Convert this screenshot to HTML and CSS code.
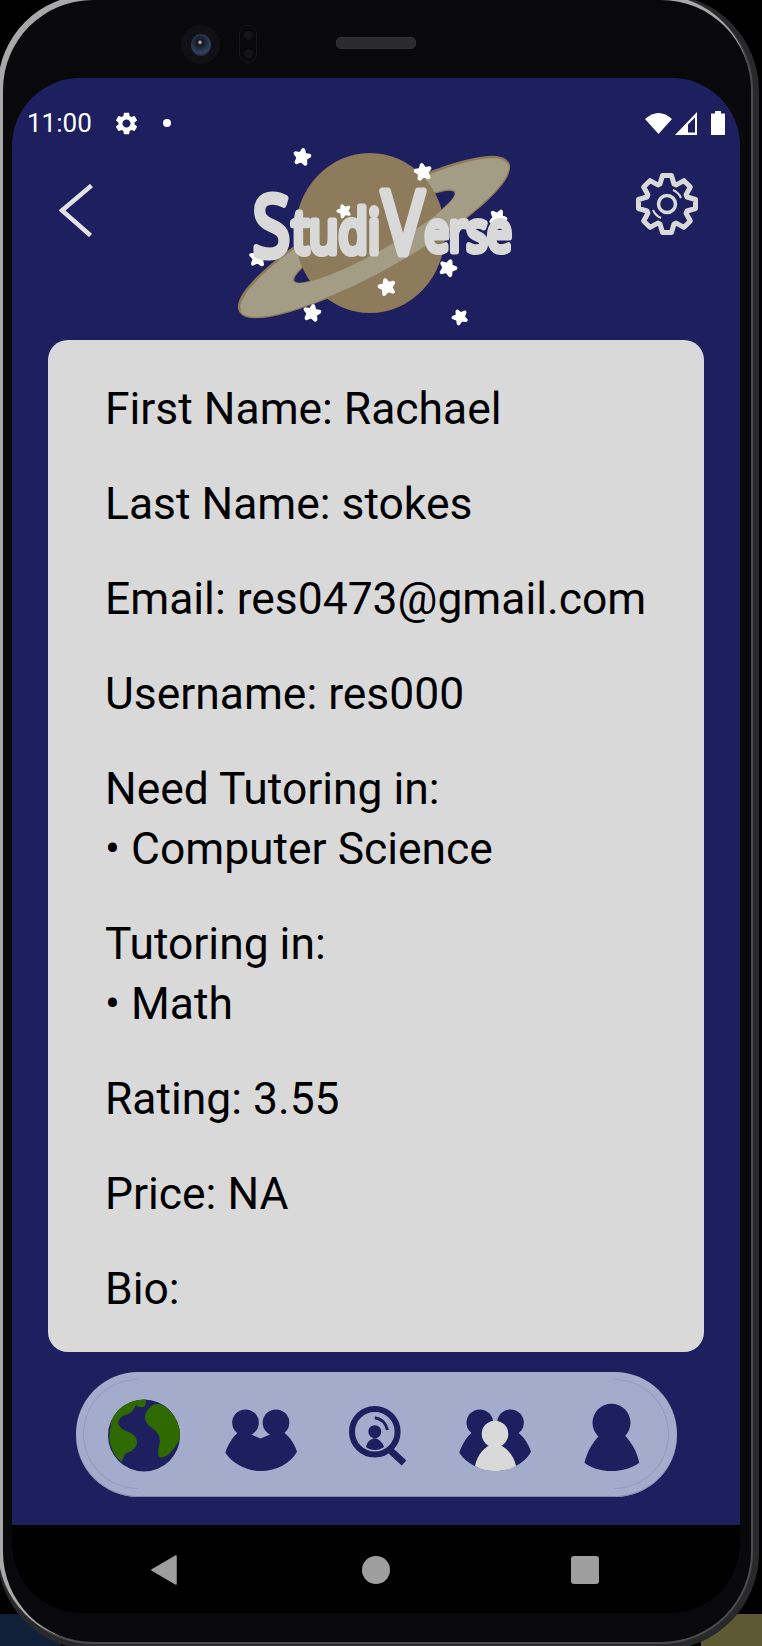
FILE: index.html
```html
<!DOCTYPE html>
<html lang="en">
<head>
<meta charset="utf-8">
<title>StudiVerse profile</title>
<link rel="stylesheet" href="styles.css">
</head>
<body>
<div class="face">
  <div class="earpiece">
    <span class="camera"><span class="lens"></span></span>
    <span class="sensor"><span class="sensor-dot"></span><span class="sensor-dot"></span></span>
    <span class="speaker"></span>
  </div>
  <main class="screen">
    <div class="status">
      <span class="time">11:00</span>
      <svg class="status-gear" viewBox="0 0 24 24"><path fill="#fff" fill-rule="evenodd" d="M19.14 12.94c.04-.3.06-.61.06-.94 0-.32-.02-.64-.07-.94l2.03-1.58c.18-.14.23-.41.12-.61l-1.92-3.32c-.12-.22-.37-.29-.59-.22l-2.39.96c-.5-.38-1.03-.7-1.62-.94l-.36-2.54c-.04-.24-.24-.41-.48-.41h-3.84c-.24 0-.43.17-.47.41l-.36 2.54c-.59.24-1.13.57-1.62.94l-2.39-.96c-.22-.08-.47 0-.59.22L2.74 8.87c-.12.21-.08.47.12.61l2.03 1.58c-.05.3-.09.63-.09.94s.02.64.07.94l-2.03 1.58c-.18.14-.23.41-.12.61l1.92 3.32c.12.22.37.29.59.22l2.39-.96c.5.38 1.03.7 1.62.94l.36 2.54c.05.24.24.41.48.41h3.84c.24 0 .44-.17.47-.41l.36-2.54c.59-.24 1.13-.56 1.62-.94l2.39.96c.22.08.47 0 .59-.22l1.92-3.32c.12-.22.07-.47-.12-.61l-2.01-1.58zM12 15.6c-1.98 0-3.6-1.62-3.6-3.6s1.62-3.6 3.6-3.6 3.6 1.62 3.6 3.6-1.62 3.6-3.6 3.6z"/></svg>
      <span class="status-dot"></span>
      <svg class="wifi" viewBox="0 0 27 24"><path fill="#fff" d="M0 8Q13.5-4 27 8L13.5 23Z"/></svg>
      <svg class="signal" viewBox="0 0 22 23"><path fill="#fff" fill-rule="evenodd" d="M22 0V23H0ZM20 5.500L13 12.500V20.500H20Z"/></svg>
      <svg class="battery" viewBox="0 0 14 24"><path fill="#fff" d="M4 0H10V2.500H14V24H0V2.500H4Z"/></svg>
    </div>
    <header class="topbar">
      <svg class="back" viewBox="0 0 34 53"><path d="M32.500 1.500L3 26.500L31.500 51.500" fill="none" stroke="#e3e3e6" stroke-width="4.500"/></svg>
      <svg class="logo" viewBox="0 0 340 210" role="img" aria-label="StudiVerse">
        <defs>
          <clipPath id="front"><rect x="0" y="107" width="400" height="120"/></clipPath>
          <path id="star" d="M0-7L2-2.500H7L3.200 1L4.500 6L0 3.200L-4.500 6L-3.200 1L-7-2.500H-2Z" fill="#fff" stroke="#fff" stroke-width="4" stroke-linejoin="round"/>
        </defs>
        <ellipse class="ring" cx="174" cy="107" rx="153" ry="34" transform="rotate(-29 174 107)"/>
        <ellipse class="hole" cx="174.500" cy="107" rx="92" ry="15" transform="rotate(-29 174 107)"/>
        <ellipse class="planet" cx="170" cy="103" rx="75" ry="80"/>
        <path class="band" clip-path="url(#front)" fill-rule="evenodd" transform="rotate(-29 174 107)" d="M21 107a153 34 0 1 0 306 0a153 34 0 1 0-306 0ZM82.500 107a92 15 0 1 0 184 0a92 15 0 1 0-184 0Z"/>
        <use href="#star" transform="translate(102 27) rotate(10)"/>
        <use href="#star" transform="translate(223 42) rotate(-10)"/>
        <use href="#star" transform="translate(144 81) rotate(-20) scale(.8)"/>
        <use href="#star" transform="translate(298 88) rotate(25)"/>
        <use href="#star" transform="translate(58 128) rotate(5)"/>
        <use href="#star" transform="translate(248 138) rotate(20)"/>
        <use href="#star" transform="translate(187 157) rotate(-15)"/>
        <use href="#star" transform="translate(112 183) rotate(10)"/>
        <use href="#star" transform="translate(260 187) rotate(-25) scale(.9)"/>
        <text class="logo-text" transform="scale(.8 1)"><tspan class="l-s" x="66" y="126">S</tspan><tspan class="l-tudi" x="115" y="123">tudi</tspan><tspan class="l-v" x="227.500" y="124">V</tspan><tspan class="l-erse" x="281" y="121">erse</tspan></text>
      </svg>
      <svg class="settings" viewBox="-33 -33 66 66">
        <polygon class="gear-line" points="-7,-20 -4.500,-28.500 4.500,-28.500 7,-20 9.190,-19.090 16.970,-23.330 23.330,-16.970 19.090,-9.190 20,-7 28.500,-4.500 28.500,4.500 20,7 19.090,9.190 23.330,16.970 16.970,23.330 9.190,19.090 7,20 4.500,28.500 -4.500,28.500 -7,20 -9.190,19.090 -16.970,23.330 -23.330,16.970 -19.090,9.190 -20,7 -28.500,4.500 -28.500,-4.500 -20,-7 -19.090,-9.190 -23.330,-16.970 -16.970,-23.330 -9.190,-19.090"/>
        <circle class="gear-hub" r="8.500"/>
        <path class="gear-arc" d="M6-14A15 15 0 0 1 14-6M-14 6A15 15 0 0 0-6 14"/>
      </svg>
    </header>
    <section class="card">
      <p class="field">First Name: Rachael</p>
      <p class="field">Last Name: stokes</p>
      <p class="field">Email: res0473@gmail.com</p>
      <p class="field">Username: res000</p>
      <p class="field">Need Tutoring in:<br>• Computer Science</p>
      <p class="field">Tutoring in:<br>• Math</p>
      <p class="field">Rating: 3.55</p>
      <p class="field">Price: NA</p>
      <p class="field">Bio:</p>
    </section>
    <nav class="pill">
      <svg class="tab" viewBox="0 0 80 80">
        <defs><clipPath id="globe"><circle cx="40" cy="40.500" r="36"/></clipPath></defs>
        <circle class="navy" cx="40" cy="40.500" r="36"/>
        <g clip-path="url(#globe)">
          <path class="green" d="M33 3H42C42.500 9 41 12 38 12.300C35 12.500 33 11 32 10C30 14 28 18 23 19.500C18 20.500 14 24 14.500 28C15 32 18 34 22 36C28 38 33 41 33 47C33 52 29 56 24 57.500C20 58.500 19 63 18 67C11 62 8 56 5.500 46C5 40 6 34 7 30C5 20 20 5 33 3Z"/>
          <path class="green" d="M52.700 9C60 8 74 20 79 40C75 46 71 53 66 58C62 62 57 64 55 61.500C53 58 55 52 56 46C56 40 52 36 48 33C44 30 41 27 41 22C41 17 47 9 52.700 9Z"/>
        </g>
      </svg>
      <svg class="tab" viewBox="0 0 80 80">
        <g class="navy"><circle cx="24.500" cy="27.700" r="13.300"/><circle cx="55" cy="27.700" r="13.300"/><path d="M4.300 57.700C8 47 13 40 20 35L39.500 43.500L60 35C67 40 73 47 76 56.700C70 68 55 76 40 76C25 76 11 68 4.300 57.700Z"/></g>
      </svg>
      <svg class="tab" viewBox="0 0 80 80">
        <circle class="lens-ring" cx="36.800" cy="36.700" r="22.800"/>
        <path class="lens-handle" d="M53 56L66 68"/>
        <g class="navy"><circle cx="36.800" cy="36.700" r="6.500"/><path d="M28 52C29 47 32 44 36.800 43C41 44 45 48 46 52C41 56 33 56 28 52Z"/></g>
        <path class="lens-wave" d="M36.800 22.700Q47 24 49.500 35"/>
      </svg>
      <svg class="tab" viewBox="0 0 80 80">
        <g class="navy"><circle cx="24.800" cy="27.700" r="13.300"/><circle cx="55.500" cy="27.700" r="13.300"/><path d="M4.300 57.700C8 47 13 40 20 35L39.500 43.500L60 35C67 40 73 47 76 56.700C70 68 55 76 40 76C25 76 11 68 4.300 57.700Z"/></g>
        <circle class="light" cx="40" cy="39" r="13.300"/>
        <path class="light" d="M20 71C22 60 30 50 40 49C50 50 59 60 61 71C54 75 47 76 40 76C33 76 26 75 20 71Z"/>
      </svg>
      <svg class="tab" viewBox="0 0 80 80">
        <g class="navy"><circle cx="39.500" cy="27.700" r="19"/><path d="M12.500 67.700C15 57 20 48 27.800 40L52.500 40C60 48 65 57 67.200 67.700C60 73 50 76 39.500 76C29 76 19 73 12.500 67.700Z"/></g>
      </svg>
    </nav>
    <div class="navbar">
      <svg class="nav-back" viewBox="0 0 26 30"><path d="M25 1V29L1 15Z" fill="#9e9e9e" stroke="#9e9e9e" stroke-width="1.500" stroke-linejoin="round"/></svg>
      <span class="nav-home"></span>
      <span class="nav-recent"></span>
    </div>
  </main>
</div>
</body>
</html>
```

FILE: styles.css
```css
* { box-sizing: border-box; }

html, body { margin: 0; height: 1646px; overflow: hidden; }

body {
  background:
    linear-gradient(90deg, #0f2038 0 8%, #000 8% 92%, #5d5a33 92%) bottom / 100% 32px no-repeat,
    #000;
  font-family: Roboto, "Liberation Sans", sans-serif;
}

.face {
  width: 748px;
  height: 1642px;
  margin-left: 3px;
  padding: 0 11px 0 9px;
  background: #09090b;
  border-radius: 90px;
  box-shadow: -3px -3px 0 2px #a8a8a8, 0 0 0 2px #4c4c4e, 1px 1px 0 7px #29292b;
}

.earpiece {
  display: flex;
  align-items: flex-start;
  height: 78px;
}

.camera {
  display: flex;
  align-items: center;
  justify-content: center;
  width: 39px;
  height: 39px;
  margin: 25px 0 0 169px;
  border-radius: 50%;
  background: #111114;
}

.lens {
  width: 20px;
  height: 22px;
  border-radius: 50%;
  background: radial-gradient(circle at 45% 38%, #aaa 0 6%, #121620 14%, #31405f 60%, #0c0e13 100%);
}

.sensor {
  display: flex;
  flex-direction: column;
  align-items: center;
  justify-content: space-around;
  width: 18px;
  height: 38px;
  margin: 25px 0 0 19px;
  border: 1px solid #17171b;
  border-radius: 9px;
}

.sensor-dot {
  width: 9px;
  height: 9px;
  border-radius: 50%;
  background: #141418;
}

.speaker {
  width: 80px;
  height: 12px;
  margin: 37px 0 0 79px;
  border-radius: 5px;
  border: 1px solid #333;
  background: #2b2b2d;
}

.screen {
  display: flex;
  flex-direction: column;
  width: 728px;
  height: 1535px;
  overflow: hidden;
  border-radius: 68px;
  background: #1d1f5f;
}

.status {
  display: flex;
  align-items: center;
  flex: none;
  height: 68px;
  padding: 22px 15px 0 15px;
  color: #fff;
}

.time { font-size: 26px; line-height: 30px; }

.status-gear { width: 27px; height: 27px; margin-left: 21px; }

.status-dot {
  width: 8px;
  height: 8px;
  margin-left: 23px;
  border-radius: 50%;
  background: #fff;
}

.wifi { width: 27px; height: 24px; margin-left: auto; }
.signal { width: 22px; height: 23px; margin-left: 3px; }
.battery { width: 14px; height: 24px; margin-left: 14px; }

.topbar {
  display: flex;
  align-items: flex-start;
  flex: none;
  height: 194px;
  padding-left: 47px;
}

.back { width: 34px; height: 53px; margin-top: 38px; flex: none; }

.logo { width: 340px; height: 210px; margin: -16px 0 0 107px; flex: none; }

.ring, .band { fill: #a49d86; }
.ring { stroke: #8d7b5b; stroke-width: 2.500; }
.hole { fill: #1d1f5f; stroke: #8d7b5b; stroke-width: 1.500; }
.planet { fill: #8d7b5b; }

.logo-text {
  fill: #d9d9d9;
  stroke: #d9d9d9;
  stroke-width: 7;
  stroke-linejoin: round;
  stroke-linecap: round;
  font-family: "Open Sans", sans-serif;
  font-weight: 400;
}

.l-s { font-size: 85px; }
.l-tudi { font-size: 60px; }
.l-v { font-size: 88px; }
.l-erse { font-size: 54px; }

.settings { width: 66px; height: 66px; margin: 25px 0 0 94px; flex: none; }

.gear-line { fill: none; stroke: #d9d9d9; stroke-width: 5; stroke-linejoin: round; }
.gear-hub { fill: none; stroke: #d9d9d9; stroke-width: 3.500; }
.gear-arc { fill: none; stroke: #d9d9d9; stroke-width: 2; }

.card {
  flex: none;
  height: 1012px;
  margin: 0 36px 0 36px;
  padding: 39px 0 0 57px;
  overflow: hidden;
  border-radius: 20px;
  background: #d9d9d9;
  color: #000;
  font-size: 44.400px;
  line-height: 60px;
}

.field { margin: 0 0 35px; white-space: nowrap; }

.pill {
  position: relative;
  display: grid;
  grid-template-columns: repeat(5, 116.900px);
  align-items: center;
  justify-items: center;
  flex: none;
  height: 125px;
  margin: 20px 63px 0 64px;
  padding-left: 10px;
  border-radius: 62px;
  background: #a3accb;
  box-shadow: inset 0 -1px 0 #8089b0;
}

.pill::before,
.pill::after {
  content: "";
  position: absolute;
  top: 7px;
  bottom: 8px;
  width: 54px;
  border: 1px solid #939cc0;
}

.pill::before { left: 7px; border-right: 0; border-radius: 55px 0 0 55px; }
.pill::after { right: 8px; border-left: 0; border-radius: 0 55px 55px 0; }

.tab { display: block; width: 80px; height: 80px; }

.navy { fill: #1d1f5f; }
.green { fill: #2f6a00; }
.light { fill: #d9d9d9; }

.lens-ring { fill: none; stroke: #1d1f5f; stroke-width: 6; }
.lens-handle { fill: none; stroke: #1d1f5f; stroke-width: 7; }
.lens-wave { fill: none; stroke: #1d1f5f; stroke-width: 3; }

.navbar {
  display: flex;
  align-items: center;
  flex: none;
  height: 88px;
  margin-top: 28px;
  padding: 2px 0 0 139px;
  background: #000;
}

.nav-back { width: 26px; height: 30px; flex: none; }

.nav-home {
  width: 28px;
  height: 28px;
  margin-left: 185px;
  border-radius: 50%;
  background: #9e9e9e;
}

.nav-recent {
  width: 28px;
  height: 28px;
  margin-left: 181px;
  border-radius: 3px;
  background: #9e9e9e;
}
```
